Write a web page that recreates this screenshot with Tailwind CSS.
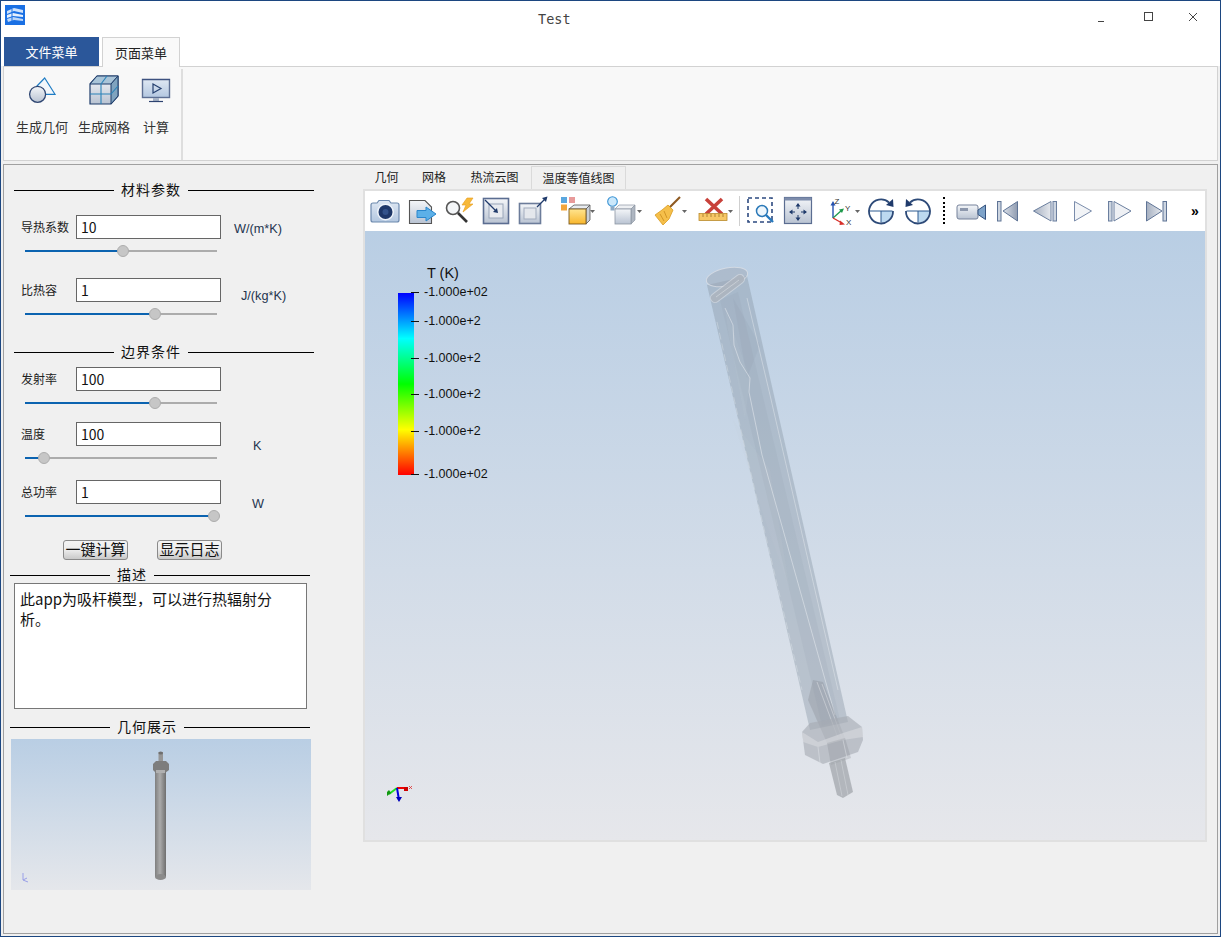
<!DOCTYPE html>
<html lang="zh">
<head>
<meta charset="utf-8">
<script src="https://cdn.jsdelivr.net/npm/@tailwindcss/browser@4"></script>
<title>Test</title>
</head>
<body class="m-0 bg-[#f0f0f0] overflow-hidden font-['Noto_Sans_CJK_SC','Noto_Sans',sans-serif]">
<svg class="absolute w-0 h-0">
  <defs>
    <linearGradient id="gb" x1="0" y1="0" x2="0" y2="1"><stop offset="0" stop-color="#f4f6f9"/><stop offset="1" stop-color="#b9c3d2"/></linearGradient>
    <linearGradient id="gy" x1="0" y1="0" x2="0" y2="1"><stop offset="0" stop-color="#ffe590"/><stop offset="1" stop-color="#f8b62c"/></linearGradient>
    <linearGradient id="gc" x1="0" y1="0" x2="0" y2="1"><stop offset="0" stop-color="#dfe8f3"/><stop offset="1" stop-color="#b3c7e0"/></linearGradient>
    <linearGradient id="gt" x1="1" y1="0" x2="0" y2="0"><stop offset="0" stop-color="#8f9bb0"/><stop offset="1" stop-color="#dde2ea"/></linearGradient>
    <linearGradient id="gt2" x1="0" y1="0" x2="1" y2="0"><stop offset="0" stop-color="#a5afc0"/><stop offset="1" stop-color="#e6e9ee"/></linearGradient>
    <linearGradient id="gp" x1="0" y1="0" x2="1" y2="0"><stop offset="0" stop-color="#7f7f7f"/><stop offset=".45" stop-color="#ababab"/><stop offset="1" stop-color="#6f6f6f"/></linearGradient>
  </defs>
</svg>

<div class="w-[1221px] h-[937px] border border-[#1c4680] flex flex-col bg-[#f0f0f0]">
  <!-- title bar -->
  <div class="h-[36px] bg-white flex items-start shrink-0">
    <svg class="w-[20px] h-[20px] ml-[4px] mt-[4px]" viewBox="0 0 20 20">
      <rect width="20" height="20" fill="#1a70e4"/>
      <path d="M2 6 L9 3 L18 5 L18 8 L9 6 L2 9 Z" fill="#cfe2fb"/>
      <path d="M2 10 L8 8 L18 10 L18 12 L8 11 L2 13 Z" fill="#e6f0fd"/>
      <path d="M2 14 L8 12 L18 14 L18 16 L9 15 L3 17 Z" fill="#bcd6f8"/>
      <path d="M7 4 V16" stroke="#1a70e4" stroke-width="1"/>
    </svg>
    <div class="ml-[513px] mt-[10px] text-[13.5px] leading-[16px] text-[#444] font-['DejaVu_Sans_Mono',monospace]">Test</div>
    <svg class="ml-auto mr-[0px] mt-[5px]" width="140" height="24" viewBox="1080 6 140 24">
      <path d="M1098 21.5 H1104" stroke="#444" stroke-width="1"/>
      <rect x="1144.5" y="12.5" width="8" height="8" fill="none" stroke="#444" stroke-width="1"/>
      <path d="M1189 13 L1197 21 M1197 13 L1189 21" stroke="#444" stroke-width="1"/>
    </svg>
  </div>

  <!-- ribbon tabs -->
  <div class="h-[29px] pl-[3px] flex items-end shrink-0 bg-white">
    <div class="w-[95px] h-[29px] bg-[#2b579a] text-white text-[13px] flex items-center justify-center">文件菜单</div>
    <div class="ml-[3px] w-[78px] h-[30px] -mb-[1px] z-10 bg-[#f9f9f9] border border-b-0 border-[#d2d2d2] text-[13px] text-[#222] flex items-center justify-center">页面菜单</div>
  </div>

  <!-- ribbon -->
  <div class="mx-[2px] h-[95px] bg-[#f8f8f8] border border-[#d2d2d2] flex shrink-0">
    <div class="w-[179px] my-[2px] h-[91px] border-r-2 border-[#dedede] relative flex">
      <div class="w-[64px] ml-[6px] flex flex-col items-center">
        <svg class="mt-[6px]" width="64" height="30" viewBox="10 75 64 30">
          <path d="M44.7 78 L55 94.3 H40 L37 86 Z" fill="#f3f7fb" stroke="#1e7cc4" stroke-width="1.2"/>
          <circle cx="37.6" cy="94.3" r="8" fill="url(#gb)" stroke="#2f4672" stroke-width="1.3"/>
        </svg>
        <div class="mt-[12px] text-[13px] leading-[20px] text-[#333] whitespace-nowrap">生成几何</div>
      </div>
      <div class="w-[60px] flex flex-col items-center">
        <svg class="mt-[6px]" width="60" height="30" viewBox="74 75 60 30">
          <path d="M90 84 L97 76 H118 V96 L111 104 H90 Z" fill="url(#gb)" stroke="#1f3d6b" stroke-width="1.2"/>
          <path d="M90 84 L97 76 H118 L111 84 Z" fill="#a9c4d8" stroke="#1f3d6b" stroke-width="1"/>
          <path d="M111 84 L118 76 V96 L111 104 Z" fill="#7fa3bf" stroke="#1f3d6b" stroke-width="1"/>
          <path d="M101 84 V104 M90 94 H111 M107 76 L101 84 M111 94 L118 86" fill="none" stroke="#2a82b8" stroke-width="1.1"/>
        </svg>
        <div class="mt-[12px] text-[13px] leading-[20px] text-[#333] whitespace-nowrap">生成网格</div>
      </div>
      <div class="w-[44px] flex flex-col items-center">
        <svg class="mt-[6px]" width="44" height="30" viewBox="134 75 44 30">
          <rect x="142.5" y="79.5" width="27" height="18" fill="url(#gc)" stroke="#5d6f93" stroke-width="1.4"/>
          <path d="M142 79.5 H170" stroke="#3d5280" stroke-width="1.2"/>
          <path d="M153 84 L161 88.5 L153 93 Z" fill="none" stroke="#25406f" stroke-width="1.2"/>
          <rect x="153" y="98" width="6" height="3" fill="#a8b4c6"/>
          <path d="M149 101.5 H163" stroke="#2c4270" stroke-width="1.2"/>
        </svg>
        <div class="mt-[12px] text-[13px] leading-[20px] text-[#333] whitespace-nowrap">计算</div>
      </div>
    </div>
  </div>

  <!-- main -->
  <div class="mx-[2px] mt-[3px] h-[770px] border border-[#a0a0a0] flex shrink-0 bg-[#f0f0f0]">
    <!-- left column -->
    <div class="w-[359px] shrink-0 flex flex-col">
      <div class="ml-[10px] w-[300px] h-[20px] mt-[15px] flex items-center"><div class="w-[100px] h-px bg-black"></div><div class="w-[74px] pb-[2px] text-center text-[14px] tracking-[1px] text-[#111] leading-[20px]">材料参数</div><div class="flex-1 h-px bg-black"></div></div>

      <div class="mt-[15px] h-[24px] flex items-center pl-[17px]">
        <div class="w-[55px] text-[12px] text-[#222]">导热系数</div>
        <div class="w-[145px] h-[24px] bg-white border border-[#666] px-[4px] text-[14px] leading-[23px] text-[#111]">10</div>
        <div class="ml-[13px] mt-[6px] text-[12.7px] text-[#24344f] font-['Liberation_Sans',sans-serif]">W/(m*K)</div>
      </div>
      <div class="mt-[6px] ml-[21px] w-[192px] h-[12px] relative flex items-center bg-transparent"><div class="w-full h-[2px] bg-[#acacac]"><div class="h-[2px] w-[98px] bg-[#0b63b0]"></div></div><div class="absolute left-[92px] top-0 w-[12px] h-[12px] rounded-full bg-[#c6c6c6] border border-[#adadad]"></div></div>

      <div class="mt-[21px] h-[24px] flex items-center pl-[17px]">
        <div class="w-[55px] text-[12px] text-[#222]">比热容</div>
        <div class="w-[145px] h-[24px] bg-white border border-[#666] px-[4px] text-[14px] leading-[23px] text-[#111]">1</div>
        <div class="ml-[20px] mt-[14px] text-[12.7px] text-[#24344f] font-['Liberation_Sans',sans-serif]">J/(kg*K)</div>
      </div>
      <div class="mt-[6px] ml-[21px] w-[192px] h-[12px] relative flex items-center"><div class="w-full h-[2px] bg-[#acacac]"><div class="h-[2px] w-[130px] bg-[#0b63b0]"></div></div><div class="absolute left-[124px] top-0 w-[12px] h-[12px] rounded-full bg-[#c6c6c6] border border-[#adadad]"></div></div>

      <div class="ml-[10px] w-[300px] h-[20px] mt-[22px] flex items-center"><div class="w-[100px] h-px bg-black"></div><div class="w-[74px] pb-[2px] text-center text-[14px] tracking-[1px] text-[#111] leading-[20px]">边界条件</div><div class="flex-1 h-px bg-black"></div></div>

      <div class="mt-[5px] h-[24px] flex items-center pl-[17px]">
        <div class="w-[55px] text-[12px] text-[#222]">发射率</div>
        <div class="w-[145px] h-[24px] bg-white border border-[#666] px-[4px] text-[14px] leading-[23px] text-[#111]">100</div>
      </div>
      <div class="mt-[6px] ml-[21px] w-[192px] h-[12px] relative flex items-center"><div class="w-full h-[2px] bg-[#acacac]"><div class="h-[2px] w-[130px] bg-[#0b63b0]"></div></div><div class="absolute left-[124px] top-0 w-[12px] h-[12px] rounded-full bg-[#c6c6c6] border border-[#adadad]"></div></div>

      <div class="mt-[13px] h-[24px] flex items-center pl-[17px]">
        <div class="w-[55px] text-[12px] text-[#222]">温度</div>
        <div class="w-[145px] h-[24px] bg-white border border-[#666] px-[4px] text-[14px] leading-[23px] text-[#111]">100</div>
        <div class="ml-[32px] mt-[26px] text-[12.7px] text-[#24344f] font-['Liberation_Sans',sans-serif]">K</div>
      </div>
      <div class="mt-[6px] ml-[21px] w-[192px] h-[12px] relative flex items-center"><div class="w-full h-[2px] bg-[#acacac]"><div class="h-[2px] w-[19px] bg-[#0b63b0]"></div></div><div class="absolute left-[13px] top-0 w-[12px] h-[12px] rounded-full bg-[#c6c6c6] border border-[#adadad]"></div></div>

      <div class="mt-[16px] h-[24px] flex items-center pl-[17px]">
        <div class="w-[55px] text-[12px] text-[#222]">总功率</div>
        <div class="w-[145px] h-[24px] bg-white border border-[#666] px-[4px] text-[14px] leading-[23px] text-[#111]">1</div>
        <div class="ml-[31px] mt-[26px] text-[12.7px] text-[#24344f] font-['Liberation_Sans',sans-serif]">W</div>
      </div>
      <div class="mt-[6px] ml-[21px] w-[192px] h-[12px] relative flex items-center"><div class="w-full h-[2px] bg-[#0b63b0]"></div><div class="absolute left-[183px] top-0 w-[12px] h-[12px] rounded-full bg-[#c6c6c6] border border-[#adadad]"></div></div>

      <div class="mt-[18px] ml-[59px] flex gap-[29px]">
        <div class="w-[65px] h-[20px] rounded-[3px] border border-[#8a8a8a] bg-linear-to-b from-[#f4f4f4] via-[#ececec] to-[#c9c9c9] text-[15px] leading-[16px] text-center text-[#111] whitespace-nowrap">一键计算</div>
        <div class="w-[65px] h-[20px] rounded-[3px] border border-[#8a8a8a] bg-linear-to-b from-[#f4f4f4] via-[#ececec] to-[#c9c9c9] text-[15px] leading-[16px] text-center text-[#111] whitespace-nowrap">显示日志</div>
      </div>

      <div class="ml-[6px] w-[300px] h-[16px] mt-[7px] flex items-center"><div class="w-[100px] h-px bg-black"></div><div class="w-[44px] pb-[3px] text-center text-[14px] tracking-[1px] text-[#111] leading-[16px]">描述</div><div class="flex-1 h-px bg-black"></div></div>

      <div class="ml-[10px] w-[293px] h-[126px] bg-white border border-[#777] px-[5px] pt-[5px] text-[15px] leading-[20px] text-[#111]">此app为吸杆模型，可以进行热辐射分<br>析。</div>

      <div class="ml-[6px] w-[300px] h-[20px] mt-[8px] flex items-center"><div class="w-[100px] h-px bg-black"></div><div class="w-[74px] pb-[2px] text-center text-[14px] tracking-[1px] text-[#111] leading-[20px]">几何展示</div><div class="flex-1 h-px bg-black"></div></div>

      <div class="ml-[7px] mt-[2px] w-[300px] h-[151px] bg-linear-to-b from-[#b9cee4] to-[#e5e7eb] relative">
        <svg class="absolute inset-0" width="300" height="151" viewBox="11 739 300 151">
          <rect x="155" y="770" width="11" height="107" fill="url(#gp)"/>
          <ellipse cx="160.5" cy="877" rx="5.5" ry="3" fill="#8b8b8b"/>
          <rect x="158.5" y="752" width="4.5" height="12" fill="#969696"/>
          <ellipse cx="160.7" cy="753" rx="2.3" ry="1.5" fill="#6f6f6f"/>
          <path d="M153 764 L156 761 H166 L169 764 V770 L165 773 H156 L153 770 Z" fill="#7d7d7d"/>
          <rect x="156" y="770" width="9" height="3" fill="#b0b0b0"/>
          <path d="M23 873 V880 L28 882 M23 880 L27 878" fill="none" stroke="#9aa0e8" stroke-width="1"/>
        </svg>
      </div>
    </div>

    <!-- right column -->
    <div class="w-[844px] shrink-0 flex flex-col">
      <div class="h-[24px] flex items-stretch text-[12px] text-[#222]">
        <div class="w-[47px] flex items-center justify-center">几何</div>
        <div class="w-[48px] flex items-center justify-center">网格</div>
        <div class="w-[73px] flex items-center justify-center">热流云图</div>
        <div class="w-[95px] mt-[1px] border-x border-t border-[#dadada] flex items-center justify-center">温度等值线图</div>
      </div>
      <div class="h-[653px] border-2 border-[#e0e0e0] flex flex-col">
        <!-- toolbar -->
        <div class="h-[40px] bg-white flex items-center pl-[2px] shrink-0">
          <!-- camera -->
          <svg width="37" height="38" viewBox="367 192 37 38"><path d="M373 203 H377 L379 200.5 H389 L391 203 H397 Q399 203 399 205 V220 Q399 222 397 222 H373 Q371 222 371 220 V205 Q371 203 373 203 Z" fill="url(#gc)" stroke="#6d89ae" stroke-width="1.2"/><circle cx="385.5" cy="212" r="8.5" fill="#eef3f9"/><circle cx="385.5" cy="212" r="7" fill="#1e3768"/><circle cx="385.5" cy="212" r="3" fill="#33528a"/></svg>
          <!-- export -->
          <svg width="37" height="38" viewBox="404 192 37 38"><path d="M409.5 200.5 H425 L431.5 207 V223.5 H409.5 Z" fill="url(#gb)" stroke="#555" stroke-width="1.1"/><path d="M417 210.5 H426 V207 L436 214 L426 221 V217.5 H417 Z" fill="#5cb0e8" stroke="#2a86cc" stroke-width="1"/></svg>
          <!-- magnifier bolt -->
          <svg width="37" height="38" viewBox="441 192 37 38"><circle cx="453" cy="208" r="6.5" fill="#f4f6f8" stroke="#555" stroke-width="1.6"/><path d="M458 213 L467 222" stroke="#333" stroke-width="2.6"/><path d="M467 198 L462 205 H466 L463 212 L473 204 H469 L473 198 Z" fill="#f7b93a" stroke="#e59a1b" stroke-width=".6"/></svg>
          <!-- zoom in square -->
          <svg width="37" height="38" viewBox="478 192 37 38"><rect x="483.5" y="198.5" width="25" height="25" fill="url(#gb)" stroke="#5b6d91" stroke-width="1.6"/><rect x="489" y="204" width="14" height="14" fill="#e8ebf0" stroke="#9aa6ba"/><path d="M485 200 L496 211" stroke="#1f3a6b" stroke-width="1.2"/><path d="M498 213 L493 212 L497 208 Z" fill="#1f3a6b"/></svg>
          <!-- zoom out square -->
          <svg width="37" height="38" viewBox="515 192 37 38"><rect x="519.5" y="203.5" width="21" height="20" fill="url(#gb)" stroke="#6c7c9a" stroke-width="1.6"/><rect x="524" y="208" width="12" height="11" fill="#e4e7ec" stroke="#a1abbd"/><path d="M537 207 L546 198" stroke="#1f3a6b" stroke-width="1.2"/><path d="M547.5 196.5 L546 202 L542 198 Z" fill="#1f3a6b"/></svg>
          <!-- colored box -->
          <svg width="46" height="38" viewBox="552 192 46 38"><rect x="561" y="197" width="6" height="6" fill="#5aa7df"/><rect x="569" y="197" width="6" height="6" fill="#e89a9a"/><rect x="561" y="204.5" width="6" height="6" fill="#f2a53c"/><path d="M569 209 L574 205 H590 L586 209 Z" fill="#e7ebf0" stroke="#555" stroke-width=".8"/><path d="M586 209 L590 205 V220 L586 224 Z" fill="#c9cfd8" stroke="#555" stroke-width=".8"/><rect x="569" y="209" width="17" height="15" fill="url(#gy)" stroke="#7a5a20" stroke-width=".9"/><path d="M590 210 H595 L592.5 213 Z" fill="#666"/></svg>
          <!-- bulb box -->
          <svg width="48" height="38" viewBox="598 192 48 38"><circle cx="612.5" cy="201.5" r="4.8" fill="#cbe8fb" stroke="#3a93d4" stroke-width="1.1"/><rect x="610.5" y="206.5" width="4" height="4" fill="#8daac4"/><path d="M615 209 L619 205 H635 L631 209 Z" fill="#eef0f3" stroke="#8d96a3" stroke-width=".7"/><path d="M631 209 L635 205 V220 L631 224 Z" fill="#aeb6c1" stroke="#8d96a3" stroke-width=".7"/><rect x="615" y="209" width="16" height="15" fill="url(#gb)" stroke="#8d96a3" stroke-width=".8"/><path d="M637 210 H642 L639.5 213 Z" fill="#666"/></svg>
          <!-- broom -->
          <svg width="44" height="38" viewBox="646 192 44 38"><path d="M680 197 L669 208" stroke="#8f5a22" stroke-width="2.2"/><path d="M668 205 L673 210 L669 219 L663 225 L655 215 L662 210 Z" fill="#f5bf4a" stroke="#d89a22" stroke-width=".8"/><path d="M660 214 L664 221 M664 211 L667 218" stroke="#c98a1c" stroke-width=".8"/><path d="M682 210 H687 L684.5 213 Z" fill="#666"/></svg>
          <!-- ruler x -->
          <svg width="44" height="38" viewBox="690 192 44 38"><path d="M706 199 L722 214 M722 199 L706 214" stroke="#c8413a" stroke-width="3.6"/><rect x="699" y="213.5" width="28" height="7" fill="#f7c766" stroke="#b98a2c" stroke-width=".8"/><path d="M703 214 V217 M707 214 V217 M711 214 V217 M715 214 V217 M719 214 V217 M723 214 V217" stroke="#946c1c" stroke-width=".7"/><path d="M728 210 H733 L730.5 213 Z" fill="#666"/></svg>
          <!-- separator -->
          <div class="w-[8px] h-[30px] flex justify-center"><div class="w-px h-full bg-[#cfcfcf] ml-[2px]"></div></div>
          <!-- dashed zoom -->
          <svg width="37" height="38" viewBox="742 192 37 38"><rect x="748" y="198" width="24" height="24" fill="none" stroke="#2d4a80" stroke-width="1.6" stroke-dasharray="4 3"/><circle cx="762" cy="211" r="5.5" fill="#eef6fc" stroke="#2b79b8" stroke-width="1.5"/><path d="M766 215 L773 222" stroke="#2679bd" stroke-width="2.4"/></svg>
          <!-- window arrows -->
          <svg width="38" height="38" viewBox="779 192 38 38"><rect x="784.5" y="197.5" width="27" height="26" fill="url(#gb)" stroke="#5b6d91" stroke-width="1.2"/><rect x="784.5" y="197.5" width="27" height="3" fill="#7d8cab"/><path d="M798 204 V209 M798 215 V220 M790 212 H795 M801 212 H806" stroke="#1f3a6b" stroke-width="1"/><path d="M798 203 L795.5 206.5 H800.5 Z M798 221 L795.5 217.5 H800.5 Z M789 212 L792.5 209.5 V214.5 Z M807 212 L803.5 209.5 V214.5 Z" fill="#1f3a6b"/></svg>
          <!-- xyz -->
          <svg width="46" height="38" viewBox="817 192 46 38"><path d="M833 218 V204" stroke="#2552b0" stroke-width="1.4"/><path d="M833 201 L830.5 205.5 H835.5 Z" fill="#2552b0"/><path d="M833 218 L842 210" stroke="#1f9a4d" stroke-width="1.4"/><path d="M844 208.5 L839 209.5 L842 213 Z" fill="#1f9a4d"/><path d="M833 218 L842 223" stroke="#d8302a" stroke-width="1.4"/><path d="M845 224.5 L840 220.5 L839.5 225 Z" fill="#d8302a"/><text x="834.5" y="203.5" font-size="8" font-family="Liberation Sans" fill="#333">Z</text><text x="845" y="211" font-size="8" font-family="Liberation Sans" fill="#333">Y</text><text x="846" y="224.5" font-size="8" font-family="Liberation Sans" fill="#333">X</text><path d="M855 210 H860 L857.5 213 Z" fill="#666"/></svg>
          <!-- rotate cw -->
          <svg width="37" height="38" viewBox="863 192 37 38"><path d="M881 211 H892.5 A11.5 11.5 0 0 1 881 222.5 Z" fill="#bcd9f0"/><path d="M869.5 211 H892.5 M881 211 V222.5" stroke="#2d5a90" stroke-width="1"/><path d="M889 202.5 A12 12 0 1 0 893 211" fill="none" stroke="#2d4a78" stroke-width="1.8"/><path d="M893 199 L893.5 207 L886 205 Z" fill="#1f3a6b"/></svg>
          <!-- rotate ccw -->
          <svg width="37" height="38" viewBox="900 192 37 38"><path d="M918 211 H929.5 A11.5 11.5 0 0 1 918 222.5 Z" fill="#bcd9f0"/><path d="M906.5 211 H929.5 M918 211 V222.5" stroke="#2d5a90" stroke-width="1"/><path d="M910 202.5 A12 12 0 1 1 906 211" fill="none" stroke="#2d4a78" stroke-width="1.8"/><path d="M906 199 L905.5 207 L913 205 Z" fill="#1f3a6b"/></svg>
          <!-- dotted separator -->
          <div class="w-[13px] h-[30px] flex justify-center"><div class="w-[2px] h-[27px] mt-[1px] border-l-2 border-dotted border-black"></div></div>
          <!-- video -->
          <svg width="40" height="38" viewBox="950 192 40 38"><rect x="957" y="205" width="21" height="14" rx="2" fill="url(#gb)" stroke="#75819a" stroke-width="1"/><rect x="960" y="208" width="8" height="3" fill="#8c97ac"/><path d="M978 210 L985.5 205 V219.5 L978 214.5 Z" fill="#7ea3c9" stroke="#35537f" stroke-width="1"/></svg>
          <!-- first -->
          <svg width="37" height="38" viewBox="990 192 37 38"><rect x="997.5" y="201.5" width="3.5" height="19.5" fill="#cdd5e0" stroke="#5f7496" stroke-width="1"/><path d="M1017.5 201.5 V221 L1003 211 Z" fill="url(#gt)" stroke="#5f7496" stroke-width="1"/></svg>
          <!-- prev -->
          <svg width="37" height="38" viewBox="1027 192 37 38"><path d="M1051 201.5 V221 L1033.5 211 Z" fill="url(#gt2)" stroke="#6b7f9f" stroke-width="1"/><rect x="1053" y="201.5" width="3.5" height="19.5" fill="#cdd5e0" stroke="#6b7f9f" stroke-width="1"/></svg>
          <!-- play -->
          <svg width="37" height="38" viewBox="1064 192 37 38"><path d="M1074.5 201.5 V221 L1091.5 211 Z" fill="#f2f4f7" stroke="#7a8cab" stroke-width="1"/></svg>
          <!-- next -->
          <svg width="37" height="38" viewBox="1101 192 37 38"><rect x="1108.5" y="201.5" width="3.5" height="19.5" fill="#cdd5e0" stroke="#6b7f9f" stroke-width="1"/><path d="M1114 201.5 V221 L1131 211 Z" fill="#eef0f4" stroke="#6b7f9f" stroke-width="1"/></svg>
          <!-- last -->
          <svg width="37" height="38" viewBox="1138 192 37 38"><path d="M1146.5 201.5 V221 L1162 211 Z" fill="url(#gt2)" stroke="#5f7496" stroke-width="1"/><rect x="1163" y="201.5" width="3.5" height="19.5" fill="#cdd5e0" stroke="#5f7496" stroke-width="1"/></svg>
          <div class="ml-[16px] text-[14px] leading-[20px] font-bold text-black font-['Liberation_Sans',sans-serif]">»</div>
        </div>

        <!-- viewport -->
        <div class="flex-1 bg-linear-to-b from-[#b9cee4] to-[#e6e7eb] relative overflow-hidden">
          <div class="absolute left-[62px] top-[33px] text-[14.5px] leading-[18px] text-[#111] font-['Liberation_Sans',sans-serif]">T (K)</div>
          <div class="absolute left-[33px] top-[62px] w-[16px] h-[182px]" style="background-image:linear-gradient(to bottom,#0000ff,#00ffff 25%,#00ff00 50%,#ffff00 75%,#ff0000)"></div>
          <svg class="absolute inset-0 pointer-events-none" width="840" height="609" viewBox="365 231 840 609">
            <path d="M411 292.5 H419 M411 321.5 H419 M411 358.5 H419 M411 394.5 H419 M411 431.5 H419 M411 474.5 H419" stroke="#111" stroke-width="1"/>

            <!-- rod -->
            <path d="M707 285 L747 276 L848 722 L810 730 Z" fill="#8b98a8" fill-opacity=".42"/>
            <path d="M720 300 L738 292 L840 720 L822 726 Z" fill="#8f9aa8" fill-opacity=".14"/>
            <path d="M725 308 L750 378 L745 420 L728 330 Z" fill="#c2ccd8" fill-opacity=".14"/>
            <path d="M733 298 L760 345 L747 378 Z" fill="#7e8b9c" fill-opacity=".1"/>
            <path d="M733 420 L770 470 L790 590 L765 520 Z" fill="#c2ccd8" fill-opacity=".12"/>
            <path d="M725 308 L733 325 L734 345 L740 362 L750 378 L749 392 L762 455 L835 715" fill="none" stroke="#e6eaef" stroke-opacity=".55" stroke-width="1"/>
            <path d="M747 298 L770 395 L838 690" fill="none" stroke="#e6eaef" stroke-opacity=".45" stroke-width="1"/>
            <path d="M717 322 L745 448 L802 690" fill="none" stroke="#e6eaef" stroke-opacity=".35" stroke-width="1" stroke-dasharray="7 4"/>
            <ellipse cx="727" cy="277" rx="21" ry="9" transform="rotate(-12 727 277)" fill="#9da8b5" fill-opacity=".5" stroke="#dfe3e8" stroke-opacity=".7"/>
            <path d="M715 298 L740 279" stroke="#dde1e6" stroke-opacity=".6" stroke-width="10" stroke-linecap="round"/>
            <path d="M715 298 L740 279" stroke="#a5aeb9" stroke-opacity=".8" stroke-width="8" stroke-linecap="round"/>
            <path d="M716 297 L739 280" stroke="#d8dde3" stroke-opacity=".6" stroke-width="1"/>

            <!-- inner tube at bottom -->
            <path d="M813 680 L823 682 L845 738 L827 743 L808 700 Z" fill="#7d8188" fill-opacity=".28"/>
            <path d="M817 682 L838 738 M822 684 L842 738" stroke="#dfe2e6" stroke-opacity=".5" stroke-width="1"/>
            <!-- nut -->
            <path d="M802 732 L810 723 L848 716 L862 727 L863 740 L858 752 L823 764 L805 755 Z" fill="#a6abb3" fill-opacity=".62"/>
            <path d="M802 732 L818 742 L843 733 L862 727 L863 737 L843 740 L818 747 L803 742 Z" fill="#d8dbe0" fill-opacity=".6"/>
            <path d="M827 743 L845 738 L851 758 L831 765 Z" fill="#7d8188" fill-opacity=".25"/>
            <path d="M818 747 L820 763 M843 740 L847 758" stroke="#e0e3e7" stroke-opacity=".5"/>
            <!-- shaft -->
            <path d="M829 763 L845 758 L853 792 L843 798 L837 795 Z" fill="#9ea2a8" fill-opacity=".7"/>
            <path d="M835 762 L842 796 M841 760 L848 795" stroke="#d6d9dd" stroke-opacity=".5"/>

            <!-- triad -->
            <path d="M397 788 H408" stroke="#ee0000" stroke-width="2"/><rect x="404" y="787" width="4" height="4" fill="#cc0000"/><path d="M409 786 L412 789 M412 786 L409 789" stroke="#dd3333" stroke-width=".8"/>
            <path d="M397 788 L389 794" stroke="#22dd22" stroke-width="2"/><path d="M387 796 L391 793 L389 790 L387 792 Z" fill="#119911"/>
            <path d="M397 788 L399 800" stroke="#0000dd" stroke-width="2"/><path d="M399 802 L396 797 H402 Z" fill="#0000bb"/>
          </svg>
          <div class="absolute left-[59px] top-[53px] text-[12.5px] leading-[16px] text-[#111] font-['Liberation_Sans',sans-serif]">-1.000e+02</div>
          <div class="absolute left-[59px] top-[82px] text-[12.5px] leading-[16px] text-[#111] font-['Liberation_Sans',sans-serif]">-1.000e+2</div>
          <div class="absolute left-[59px] top-[119px] text-[12.5px] leading-[16px] text-[#111] font-['Liberation_Sans',sans-serif]">-1.000e+2</div>
          <div class="absolute left-[59px] top-[155px] text-[12.5px] leading-[16px] text-[#111] font-['Liberation_Sans',sans-serif]">-1.000e+2</div>
          <div class="absolute left-[59px] top-[192px] text-[12.5px] leading-[16px] text-[#111] font-['Liberation_Sans',sans-serif]">-1.000e+2</div>
          <div class="absolute left-[59px] top-[235px] text-[12.5px] leading-[16px] text-[#111] font-['Liberation_Sans',sans-serif]">-1.000e+02</div>
        </div>
      </div>
    </div>
  </div>
</div>
</body>
</html>
